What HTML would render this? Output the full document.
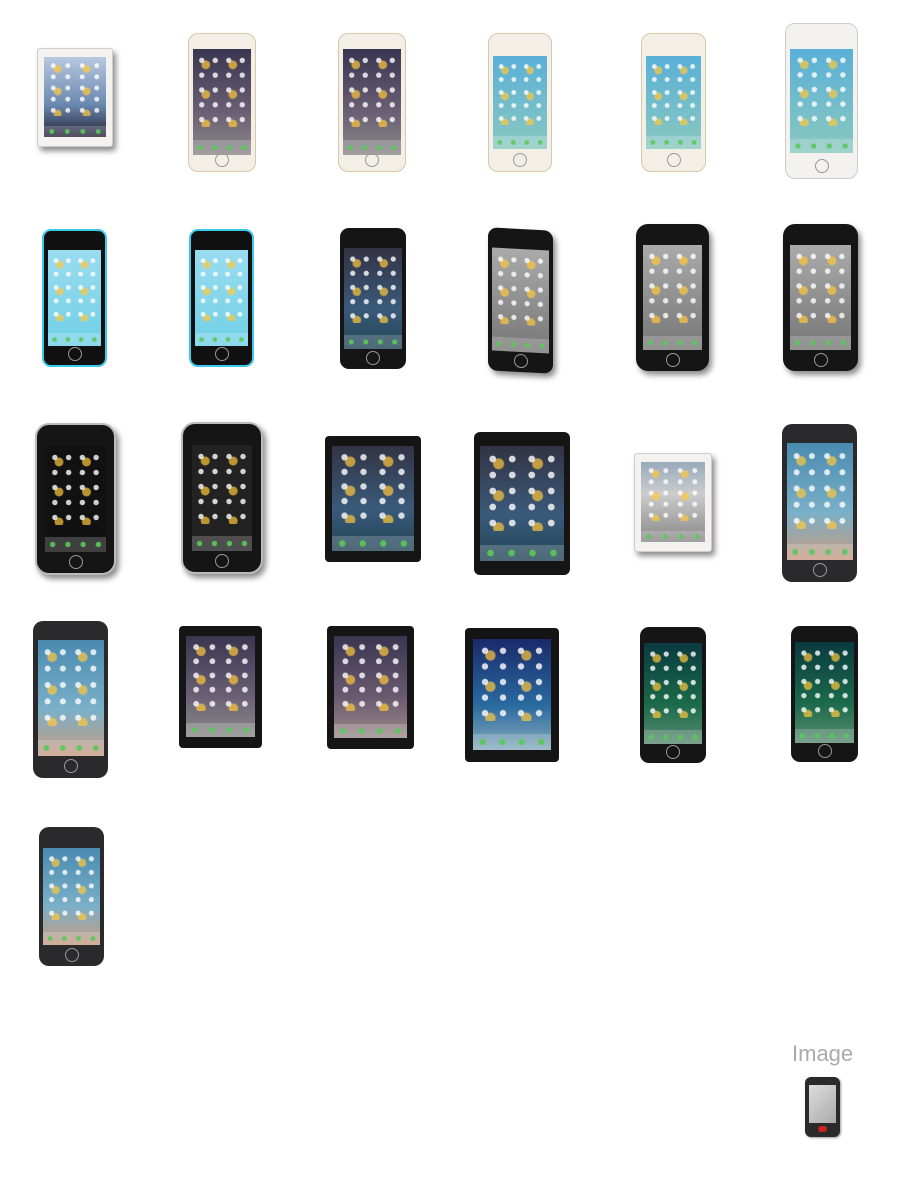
<!DOCTYPE html>
<html><head><meta charset="utf-8"><style>
html,body{margin:0;padding:0;background:#fff;width:900px;height:1200px;overflow:hidden;position:relative;font-family:"Liberation Sans",sans-serif}
.d{position:absolute;box-sizing:border-box}
.s{position:absolute;overflow:hidden}
.ph .s{left:6%;right:6%;top:14%;bottom:14%}
.pad .s{left:8%;right:8%;top:8%;bottom:9%}
.s:before{content:"";position:absolute;left:4%;right:4%;top:4%;height:70%;
background:radial-gradient(circle,rgba(255,255,255,.8) 0 24%,transparent 29%),radial-gradient(circle at 40% 40%,rgba(255,200,60,.7) 0 16%,transparent 20%);
background-size:25% 20%,50% 40%;}
.s:after{content:"";position:absolute;left:0;right:0;bottom:0;height:14%;background:rgba(255,255,255,.2) radial-gradient(circle,rgba(90,200,90,.9) 0 22%,transparent 28%);background-size:25% 100%}
.hb{position:absolute;left:50%;bottom:3%;width:12px;height:12px;margin-left:-7px;border:1px solid #999;border-radius:50%}
.blk{background:#151515;border-radius:9px}
.wht{background:#f4f2ee;border:1px solid #ccc;border-radius:10px}
.gld{background:#f3efe6;border:1px solid #d8c8a8;border-radius:10px}
.cyn{background:#111;border:2px solid #3cc8ee;border-radius:9px}
.gry{background:#2a2a2c;border-radius:10px}
.sh{box-shadow:3px 4px 6px rgba(0,0,0,.45)}
.w6{background:linear-gradient(#3a3550,#6a6075 60%,#8a8888)}
.w7{background:linear-gradient(#9adcf0,#70d0e6)}
.w5{background:linear-gradient(#334,#3a5a7a 60%,#245)}
.w4{background:linear-gradient(#aaa,#777)}
.w9{background:linear-gradient(#4a8ab0,#7ab0c8 60%,#c89a80)}
.w10{background:linear-gradient(#0a3a40,#1a6a4a 60%,#5a8a70)}
.wi{background:linear-gradient(#b8c8e0,#6a88b0 60%,#223)}
.wb{background:linear-gradient(#1a2a6a,#2a6aa0 60%,#8ab)}
</style></head><body>
<!-- row1 -->
<div class="d pad wht sh" style="left:37px;top:48px;width:76px;height:99px;border-radius:3px"><div class="s wi"></div></div>
<div class="d ph gld" style="left:188px;top:33px;width:68px;height:139px"><div class="s w6" style="top:11%;bottom:12%"></div><div class="hb"></div></div>
<div class="d ph gld" style="left:338px;top:33px;width:68px;height:139px"><div class="s w6" style="top:11%;bottom:12%"></div><div class="hb"></div></div>
<div class="d ph gld" style="left:488px;top:33px;width:64px;height:139px"><div class="s" style="top:16%;bottom:16%;background:linear-gradient(#5ab0d8,#8ac8c0)"></div><div class="hb"></div></div>
<div class="d ph gld" style="left:641px;top:33px;width:65px;height:139px"><div class="s" style="top:16%;bottom:16%;background:linear-gradient(#5ab0d8,#8ac8c0)"></div><div class="hb"></div></div>
<div class="d ph wht" style="left:785px;top:23px;width:73px;height:156px"><div class="s" style="top:16%;bottom:16%;background:linear-gradient(#5ab0d8,#8ac8c0)"></div><div class="hb"></div></div>
<!-- row2 -->
<div class="d ph cyn" style="left:42px;top:229px;width:65px;height:138px"><div class="s w7"></div><div class="hb"></div></div>
<div class="d ph cyn" style="left:189px;top:229px;width:65px;height:138px"><div class="s w7"></div><div class="hb"></div></div>
<div class="d ph blk" style="left:340px;top:228px;width:66px;height:141px"><div class="s w5"></div><div class="hb"></div></div>
<div class="d ph blk sh" style="left:488px;top:229px;width:65px;height:143px;transform:skewY(3deg)"><div class="s w4"></div><div class="hb"></div></div>
<div class="d ph blk sh" style="left:636px;top:224px;width:73px;height:147px;border-radius:12px"><div class="s w4" style="left:9%;right:9%"></div><div class="hb"></div></div>
<div class="d ph blk sh" style="left:783px;top:224px;width:75px;height:147px;border-radius:12px"><div class="s w4" style="left:9%;right:9%"></div><div class="hb"></div></div>
<!-- row3 -->
<div class="d ph blk sh" style="left:35px;top:423px;width:81px;height:152px;border-radius:14px;border:2px solid #bbb"><div class="s" style="left:11%;right:11%;background:#111"></div><div class="hb"></div></div>
<div class="d ph blk sh" style="left:181px;top:422px;width:82px;height:152px;border-radius:14px;border:2px solid #bbb"><div class="s" style="left:11%;right:11%;background:#222"></div><div class="hb"></div></div>
<div class="d pad blk" style="left:325px;top:436px;width:96px;height:126px;border-radius:4px"><div class="s w5" style="left:7%;right:7%"></div></div>
<div class="d pad blk" style="left:474px;top:432px;width:96px;height:143px;border-radius:6px"><div class="s w5" style="left:6%;right:6%;top:10%;bottom:10%"></div></div>
<div class="d pad wht sh" style="left:634px;top:453px;width:78px;height:99px;border-radius:3px"><div class="s w4" style="background:linear-gradient(#9ab,#ccc 40%,#888)"></div></div>
<div class="d ph gry" style="left:782px;top:424px;width:75px;height:158px"><div class="s w9" style="top:12%;bottom:14%"></div><div class="hb"></div></div>
<!-- row4 -->
<div class="d ph gry" style="left:33px;top:621px;width:75px;height:157px"><div class="s w9" style="top:12%;bottom:14%"></div><div class="hb"></div></div>
<div class="d pad blk" style="left:179px;top:626px;width:83px;height:122px;border-radius:4px"><div class="s w6"></div></div>
<div class="d pad blk" style="left:327px;top:626px;width:87px;height:123px;border-radius:4px"><div class="s w6" style="background:linear-gradient(#3a3550,#6a5a70 60%,#9a8a88)"></div></div>
<div class="d pad blk" style="left:465px;top:628px;width:94px;height:134px;border-radius:4px"><div class="s wb"></div></div>
<div class="d ph blk" style="left:640px;top:627px;width:66px;height:136px"><div class="s w10" style="top:12%;bottom:14%"></div><div class="hb"></div></div>
<div class="d ph blk" style="left:791px;top:626px;width:67px;height:136px"><div class="s w10" style="top:12%;bottom:14%"></div><div class="hb"></div></div>
<!-- row5 -->
<div class="d ph gry" style="left:39px;top:827px;width:65px;height:139px"><div class="s w9" style="top:15%;bottom:15%"></div><div class="hb"></div></div>
<div style="position:absolute;left:792px;top:1041px;font-size:22px;color:#aaa">Image</div>
<div style="position:absolute;left:805px;top:1077px;width:35px;height:60px;background:#2a2a2a;border-radius:6px;box-shadow:1px 1px 2px rgba(0,0,0,.4)">
<div style="position:absolute;left:4px;right:4px;top:8px;height:38px;background:linear-gradient(135deg,#ddd,#aaa)"></div>
<div style="position:absolute;left:13px;top:49px;width:9px;height:6px;background:#c22;border-radius:3px"></div>
</div>
</body></html>
